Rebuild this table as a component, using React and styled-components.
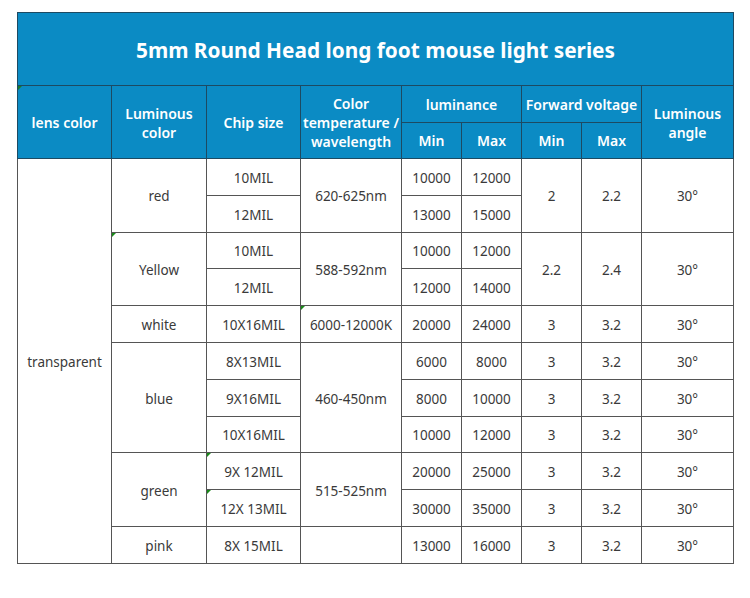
import styled, { createGlobalStyle } from "styled-components";

const GlobalStyle = createGlobalStyle`
  html, body {
    margin: 0;
    padding: 0;
    background: #fff;
  }
  body {
    font-family: "Noto Sans", "Open Sans", "Liberation Sans", sans-serif;
  }
`;

const groups = [
  {
    color: "red",
    temp: "620-625nm",
    shared: ["2", "2.2"],
    chips: [
      ["10MIL", "10000", "12000"],
      ["12MIL", "13000", "15000"],
    ],
  },
  {
    color: "Yellow",
    flag: true,
    temp: "588-592nm",
    shared: ["2.2", "2.4"],
    chips: [
      ["10MIL", "10000", "12000"],
      ["12MIL", "12000", "14000"],
    ],
  },
  {
    color: "white",
    temp: "6000-12000K",
    tempFlag: true,
    chips: [["10X16MIL", "20000", "24000"]],
  },
  {
    color: "blue",
    temp: "460-450nm",
    chips: [
      ["8X13MIL", "6000", "8000"],
      ["9X16MIL", "8000", "10000"],
      ["10X16MIL", "10000", "12000"],
    ],
  },
  {
    color: "green",
    temp: "515-525nm",
    chipFlag: true,
    chips: [
      ["9X 12MIL", "20000", "25000"],
      ["12X 13MIL", "30000", "35000"],
    ],
  },
  {
    color: "pink",
    temp: "",
    chips: [["8X 15MIL", "13000", "16000"]],
  },
];

const totalRows = groups.reduce((n, g) => n + g.chips.length, 0);
const widths = [94, 95, 94, 101, 60, 60, 60, 60, 92];

export default function App() {
  return (
    <>
      <GlobalStyle />
      <Page>
        <Table>
          <colgroup>
            {widths.map((w, i) => (
              <col key={i} style={{ width: w }} />
            ))}
          </colgroup>
          <thead>
            <TitleRow>
              <Title colSpan={9}>5mm Round Head long foot mouse light series</Title>
            </TitleRow>
            <HeadRow>
              <Head rowSpan={2} $flag>lens color</Head>
              <Head rowSpan={2}>
                Luminous
                <br />
                color
              </Head>
              <Head rowSpan={2}>Chip size</Head>
              <Head rowSpan={2}>
                Color
                <br />
                temperature /
                <br />
                wavelength
              </Head>
              <Head colSpan={2}>luminance</Head>
              <Head colSpan={2}>Forward voltage</Head>
              <Head rowSpan={2}>
                Luminous
                <br />
                angle
              </Head>
            </HeadRow>
            <HeadRow>
              <Head>Min</Head>
              <Head>Max</Head>
              <Head>Min</Head>
              <Head>Max</Head>
            </HeadRow>
          </thead>
          <tbody>
            {groups.map((g, gi) =>
              g.chips.map((c, ci) => (
                <Row key={`${gi}-${ci}`}>
                  {gi === 0 && ci === 0 && <Cell rowSpan={totalRows}>transparent</Cell>}
                  {ci === 0 && (
                    <Cell rowSpan={g.chips.length} $flag={g.flag}>
                      {g.color}
                    </Cell>
                  )}
                  <Cell $flag={g.chipFlag}>{c[0]}</Cell>
                  {ci === 0 && (
                    <Cell rowSpan={g.chips.length} $flag={g.tempFlag}>
                      {g.temp}
                    </Cell>
                  )}
                  <Cell>{c[1]}</Cell>
                  <Cell>{c[2]}</Cell>
                  {g.shared ? (
                    ci === 0 && (
                      <>
                        <Cell rowSpan={g.chips.length}>{g.shared[0]}</Cell>
                        <Cell rowSpan={g.chips.length}>{g.shared[1]}</Cell>
                        <Cell rowSpan={g.chips.length}>30°</Cell>
                      </>
                    )
                  ) : (
                    <>
                      <Cell>3</Cell>
                      <Cell>3.2</Cell>
                      <Cell>30°</Cell>
                    </>
                  )}
                </Row>
              ))
            )}
          </tbody>
        </Table>
      </Page>
    </>
  );
}

const Page = styled.div`
  width: 750px;
  height: 598px;
  padding: 12px 0 0 17px;
  box-sizing: border-box;
`;

const Table = styled.table`
  width: 716px;
  table-layout: fixed;
  border-collapse: collapse;
  border: 1px solid #3d3d3d;
`;

const TitleRow = styled.tr`
  height: 73px;
`;

const Title = styled.th`
  background: #0b8bc4;
  color: #fff;
  font-size: 20.8px;
  font-weight: 700;
  border: 1px solid #1d4a62;
  text-align: center;
  vertical-align: middle;
  padding: 2px 0 0;
`;

const HeadRow = styled.tr`
  height: 36.5px;
`;

const Head = styled.th`
  position: relative;
  background: #0b8bc4;
  color: #fff;
  font-size: 14px;
  font-weight: 600;
  line-height: 19px;
  border: 1px solid #1d4a62;
  text-align: center;
  vertical-align: middle;
  padding: 1px 0 0;
  white-space: nowrap;

  ${({ $flag }) =>
    $flag &&
    `
    &::before {
      content: "";
      position: absolute;
      left: 0;
      top: 0;
      border-top: 4px solid #1a7a2a;
      border-right: 4px solid transparent;
    }
  `}
`;

const Row = styled.tr`
  height: 36.8px;
`;

const Cell = styled.td`
  position: relative;
  color: #3a3a3a;
  font-size: 13.5px;
  line-height: 18px;
  border: 1px solid #555;
  text-align: center;
  vertical-align: middle;
  padding: 2px 0 0;
  white-space: nowrap;

  ${({ $flag }) =>
    $flag &&
    `
    &::before {
      content: "";
      position: absolute;
      left: 0;
      top: 0;
      border-top: 4px solid #1a8a1a;
      border-right: 4px solid transparent;
    }
  `}
`;
